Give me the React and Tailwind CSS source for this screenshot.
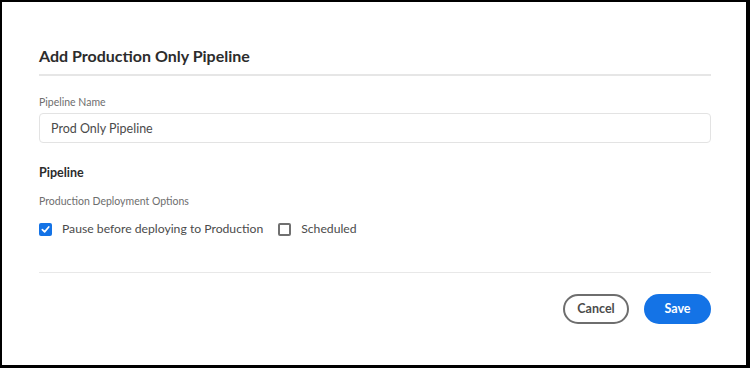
import { useState } from 'react'

const font = { fontFamily: 'Lato, "Open Sans", sans-serif' }

function Checkbox({ checked, onChange, label }) {
  return (
    <label className="flex items-center cursor-pointer" onClick={onChange}>
      {checked ? (
        <span className="w-[13px] h-[13px] rounded-[2px] bg-[#1473e6] flex items-center justify-center">
          <svg width="9" height="9" viewBox="0 0 10 10" fill="none">
            <path d="M1.5 5.2 L4 7.6 L8.6 2.2" stroke="white" strokeWidth="1.9" strokeLinecap="round" strokeLinejoin="round" />
          </svg>
        </span>
      ) : (
        <span className="w-[13px] h-[13px] rounded-[2px] border-2 border-[#707070] bg-white" />
      )}
      <span className="ml-[10px] text-[12.2px] text-[#4b4b4b]">{label}</span>
    </label>
  )
}

export default function App() {
  const [name, setName] = useState('Prod Only Pipeline')
  const [pause, setPause] = useState(true)
  const [scheduled, setScheduled] = useState(false)

  return (
    <div
      className="w-[750px] h-[368px] bg-white border-black border-l-2 border-t-2 border-r-4 border-b-3 pl-[37px] pr-[35px] pt-[42px] flex flex-col"
      style={font}
    >
      <h2 className="text-[16px] leading-[24px] font-bold text-[#2c2c2c]">
        Add Production Only Pipeline
      </h2>
      <div className="h-[2px] bg-[#e6e6e6] mt-[6px]" />

      <label className="mt-[18px] text-[10.5px] leading-[16px] text-[#6e6e6e]">Pipeline Name</label>
      <input
        value={name}
        onChange={(e) => setName(e.target.value)}
        className="mt-[3px] h-[30px] w-full rounded-[4px] border border-[#e3e3e3] px-[11px] text-[12.5px] text-[#4b4b4b] outline-none"
      />

      <h3 className="mt-[21px] text-[12.5px] leading-[18px] font-bold text-[#2c2c2c]">Pipeline</h3>
      <p className="mt-[11px] text-[10.5px] leading-[16px] text-[#6e6e6e]">Production Deployment Options</p>

      <div className="mt-[11px] flex items-center gap-[15px] h-[18px]">
        <Checkbox checked={pause} onChange={() => setPause(!pause)} label="Pause before deploying to Production" />
        <Checkbox checked={scheduled} onChange={() => setScheduled(!scheduled)} label="Scheduled" />
      </div>

      <div className="h-px bg-[#e8e8e8] mt-[34px]" />

      <div className="mt-[21px] flex justify-end gap-[15px]">
        <button className="w-[66px] h-[30px] rounded-full border-2 border-[#6e6e6e] text-[12.5px] font-bold text-[#4b4b4b] cursor-pointer">
          Cancel
        </button>
        <button className="w-[67px] h-[30px] rounded-full bg-[#1473e6] text-[12.5px] font-bold text-white cursor-pointer">
          Save
        </button>
      </div>
    </div>
  )
}
